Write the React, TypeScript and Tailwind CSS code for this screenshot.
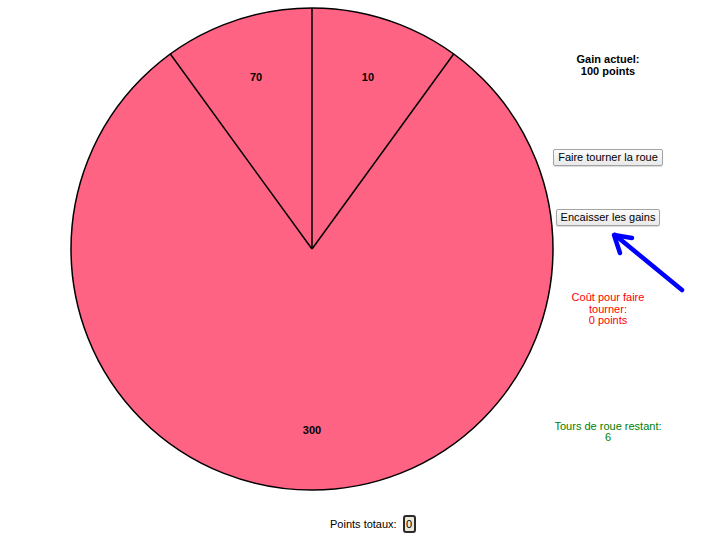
import React from "react";

const CX = 243;
const CY = 243;
const R = 241;

function pt(angleDeg: number, r: number) {
  const a = (angleDeg * Math.PI) / 180;
  return [CX + r * Math.sin(a), CY - r * Math.cos(a)];
}

function Wheel() {
  const [lx, ly] = pt(-36, R);
  const [rx, ry] = pt(36, R);
  const [tx, ty] = pt(0, R);
  const labels = [
    { t: "70", a: -18 },
    { t: "10", a: 18 },
    { t: "300", a: 180 },
  ];
  return (
    <svg width="486" height="486" viewBox="0 0 486 486" className="shrink-0 ml-[69px] mt-[6px]">
      <circle cx={CX} cy={CY} r={R} fill="#ff6384" stroke="#000" strokeWidth="1.5" />
      <line x1={CX} y1={CY} x2={lx} y2={ly} stroke="#000" strokeWidth="1.5" />
      <line x1={CX} y1={CY} x2={tx} y2={ty} stroke="#000" strokeWidth="1.5" />
      <line x1={CX} y1={CY} x2={rx} y2={ry} stroke="#000" strokeWidth="1.5" />
      {labels.map((l) => {
        const [x, y] = pt(l.a, 181);
        return (
          <text
            key={l.t}
            x={x}
            y={y + 4}
            textAnchor="middle"
            fontFamily="'Liberation Sans', Arial, sans-serif"
            fontWeight="bold"
            fontSize="11"
            fill="#000"
          >
            {l.t}
          </text>
        );
      })}
    </svg>
  );
}

function Btn({ children }: { children: React.ReactNode }) {
  return (
    <button className="h-[17px] px-[4px] border border-[#a3a3a3] rounded-[2px] bg-gradient-to-b from-[#fbfbfb] to-[#e9e9e9] text-[11px] leading-none text-black whitespace-nowrap shadow-[0_1px_1px_rgba(0,0,0,0.15)]">
      {children}
    </button>
  );
}

export default function App() {
  return (
    <div className="relative w-[720px] h-[540px] bg-white overflow-hidden font-['Liberation_Sans',Arial,sans-serif] text-black">
      <div className="flex">
        <Wheel />
        <div className="w-[106px] flex flex-col items-center text-center text-[11px] leading-[11.5px]">
          <div className="mt-[54px] font-bold whitespace-nowrap">
            <div>Gain actuel:</div>
            <div>100 points</div>
          </div>
          <div className="mt-[72px]">
            <Btn>Faire tourner la roue</Btn>
          </div>
          <div className="mt-[43px]">
            <Btn>Encaisser les gains</Btn>
          </div>
          <div className="mt-[66px] text-[#ff0000] whitespace-nowrap">
            <div>Coût pour faire</div>
            <div>tourner:</div>
            <div>0 points</div>
          </div>
          <div className="mt-[94px] text-[#008000] whitespace-nowrap">
            <div>Tours de roue restant:</div>
            <div>6</div>
          </div>
        </div>
      </div>
      <div className="mt-[22px] h-[20px] flex items-center pl-[330px] text-[11px]">
        <span>Points totaux:</span>
        <span className="ml-[6px] w-[13px] h-[18px] flex items-center justify-center border-2 border-[#2a2a2a] rounded-[3px] bg-[#eee8d6] text-[11px] leading-none">
          0
        </span>
      </div>
      <svg className="absolute left-0 top-0 pointer-events-none" width="720" height="540">
        <g stroke="#0000ff" strokeWidth="4.5" strokeLinecap="round" strokeLinejoin="round" fill="none">
          <line x1="682" y1="290" x2="615" y2="235" />
          <polyline points="632,238 614,235 620,253" />
        </g>
      </svg>
    </div>
  );
}
